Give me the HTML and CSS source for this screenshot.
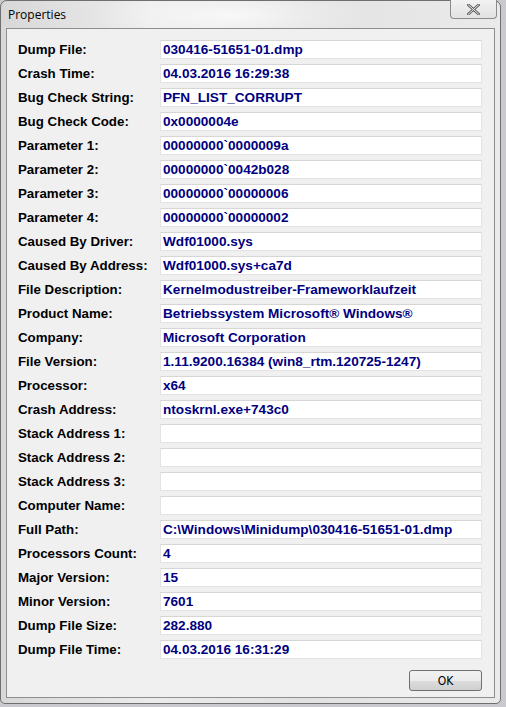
FILE: index.html
```html
<!DOCTYPE html>
<html lang="en">
<head>
  <meta charset="UTF-8" />
  <title>Properties</title>
  <link rel="stylesheet" href="styles.css">
</head>
<body>
  <div class="window">
    <div class="titlebar">
      <span class="title">Properties</span>
      <button class="close" aria-label="Close">
        <svg width="13" height="11" viewBox="0 0 13 11">
          <path d="M1.5 1 L11.5 10 M11.5 1 L1.5 10" stroke="#5a5a5a" stroke-width="2.6" stroke-linecap="square"/>
          <path d="M1.5 1 L11.5 10 M11.5 1 L1.5 10" stroke="#f4f4f4" stroke-width="1" stroke-linecap="square"/>
        </svg>
      </button>
    </div>
    <div class="client">
      <div class="fields">
        <div class="row"><span class="label">Dump File:</span><span class="value">030416-51651-01.dmp</span></div>
        <div class="row"><span class="label">Crash Time:</span><span class="value">04.03.2016 16:29:38</span></div>
        <div class="row"><span class="label">Bug Check String:</span><span class="value">PFN_LIST_CORRUPT</span></div>
        <div class="row"><span class="label">Bug Check Code:</span><span class="value">0x0000004e</span></div>
        <div class="row"><span class="label">Parameter 1:</span><span class="value">00000000`0000009a</span></div>
        <div class="row"><span class="label">Parameter 2:</span><span class="value">00000000`0042b028</span></div>
        <div class="row"><span class="label">Parameter 3:</span><span class="value">00000000`00000006</span></div>
        <div class="row"><span class="label">Parameter 4:</span><span class="value">00000000`00000002</span></div>
        <div class="row"><span class="label">Caused By Driver:</span><span class="value">Wdf01000.sys</span></div>
        <div class="row"><span class="label">Caused By Address:</span><span class="value">Wdf01000.sys+ca7d</span></div>
        <div class="row"><span class="label">File Description:</span><span class="value">Kernelmodustreiber-Frameworklaufzeit</span></div>
        <div class="row"><span class="label">Product Name:</span><span class="value">Betriebssystem Microsoft® Windows®</span></div>
        <div class="row"><span class="label">Company:</span><span class="value">Microsoft Corporation</span></div>
        <div class="row"><span class="label">File Version:</span><span class="value">1.11.9200.16384 (win8_rtm.120725-1247)</span></div>
        <div class="row"><span class="label">Processor:</span><span class="value">x64</span></div>
        <div class="row"><span class="label">Crash Address:</span><span class="value">ntoskrnl.exe+743c0</span></div>
        <div class="row"><span class="label">Stack Address 1:</span><span class="value"></span></div>
        <div class="row"><span class="label">Stack Address 2:</span><span class="value"></span></div>
        <div class="row"><span class="label">Stack Address 3:</span><span class="value"></span></div>
        <div class="row"><span class="label">Computer Name:</span><span class="value"></span></div>
        <div class="row"><span class="label">Full Path:</span><span class="value">C:\Windows\Minidump\030416-51651-01.dmp</span></div>
        <div class="row"><span class="label">Processors Count:</span><span class="value">4</span></div>
        <div class="row"><span class="label">Major Version:</span><span class="value">15</span></div>
        <div class="row"><span class="label">Minor Version:</span><span class="value">7601</span></div>
        <div class="row"><span class="label">Dump File Size:</span><span class="value">282.880</span></div>
        <div class="row"><span class="label">Dump File Time:</span><span class="value">04.03.2016 16:31:29</span></div>
      </div>
      <div class="buttons">
        <button class="ok">OK</button>
      </div>
    </div>
  </div>
</body>
</html>
```

FILE: styles.css
```css
body {
  margin: 0;
  background: #c9c9cf;
  font-family: 'Liberation Sans', Arial, sans-serif;
  overflow: hidden;
}
.window {
  width: 501px;
  height: 704px;
  background: linear-gradient(90deg, #d8d8d8 0%, #ececec 30%, #e2e2e2 60%, #eaeaea 100%);
  border: 1px solid #6f6f6f;
  border-radius: 7px 7px 5px 5px;
  box-sizing: border-box;
  display: flex;
  flex-direction: column;
}
.titlebar {
  height: 27px;
  position: relative;
  display: flex;
  align-items: center;
  background: radial-gradient(ellipse 140px 30px at 230px 14px, rgba(255,255,255,0.7), rgba(255,255,255,0) 100%);
  border-radius: 6px 6px 0 0;
}
.title {
  font-family: 'Open Sans', 'Noto Sans', sans-serif;
  font-size: 12px;
  color: #000;
  padding-left: 7px;
}
.close {
  position: absolute;
  right: 3px;
  top: -1px;
  width: 47px;
  height: 19px;
  border: 1px solid #8c8c8c;
  border-top: none;
  border-radius: 0 0 4px 4px;
  background: linear-gradient(#f2f2f2, #e2e2e2);
  padding: 0;
  display: flex;
  align-items: center;
  justify-content: center;
}
.client {
  flex: 1;
  margin: 0 5px 5px 5px;
  background: #f0f0f0;
  border: 1px solid #8e8e8e;
  padding: 11px 12px 0 11px;
  display: flex;
  flex-direction: column;
}
.fields {
  display: flex;
  flex-direction: column;
  gap: 5px;
}
.row {
  display: flex;
  align-items: center;
  height: 19px;
}
.label {
  width: 142px;
  font-weight: bold;
  font-size: 13.3px;
  color: #000;
}
.value {
  flex: 1;
  height: 19px;
  box-sizing: border-box;
  background: #fff;
  border: 1px solid #e3e3e3;
  border-top-color: #d6d6d6;
  padding-left: 2px;
  font-weight: bold;
  font-size: 13.6px;
  line-height: 17px;
  color: #000080;
  white-space: nowrap;
}
.buttons {
  display: flex;
  justify-content: flex-end;
  margin-top: 11px;
}
.ok {
  width: 73px;
  height: 21px;
  border: 1px solid #707070;
  border-radius: 3px;
  background: linear-gradient(#f2f2f2 0%, #ebebeb 50%, #dddddd 51%, #cfcfcf 100%);
  font-family: 'DejaVu Sans Condensed', 'DejaVu Sans', sans-serif;
  font-size: 12px;
  color: #000;
  padding: 0;
}
```
